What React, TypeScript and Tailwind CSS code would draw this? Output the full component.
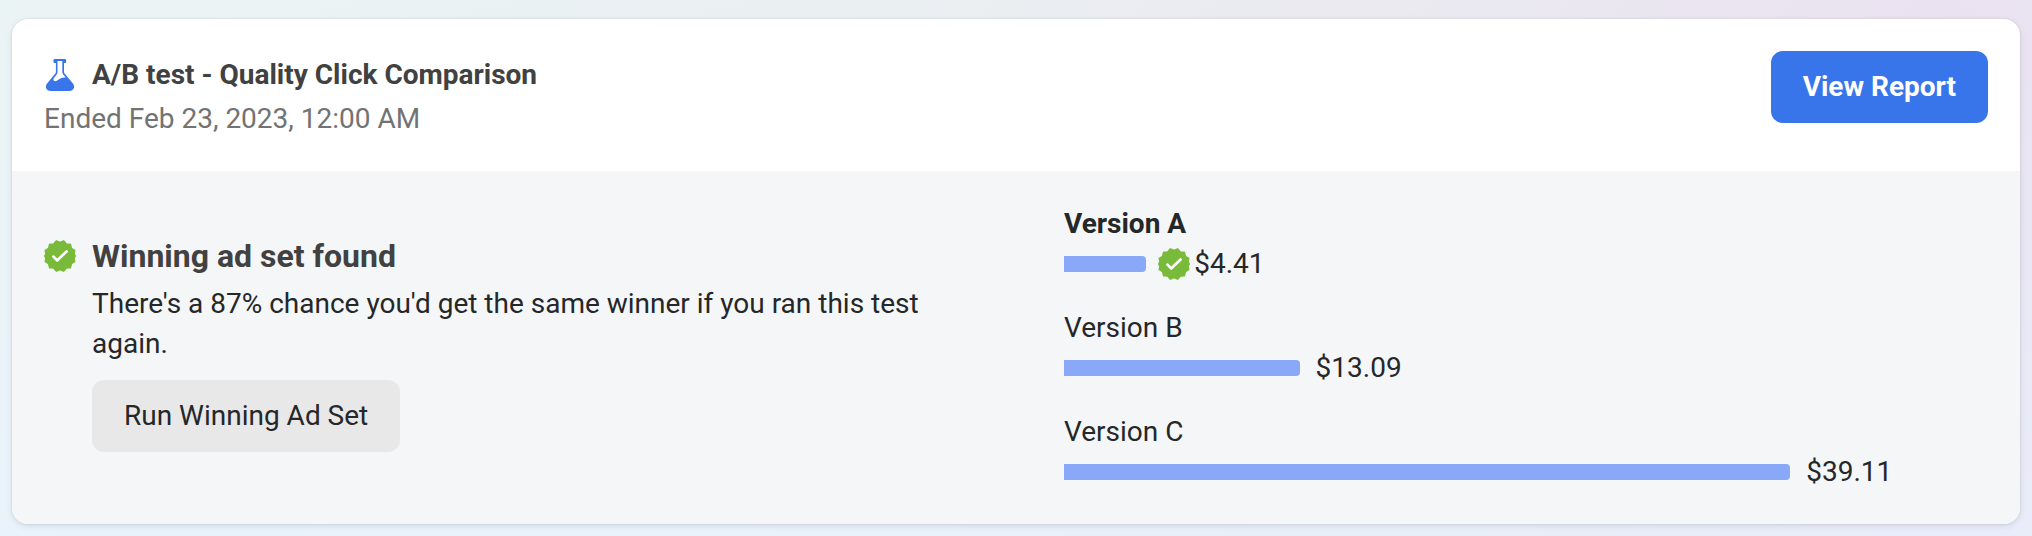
import { useId } from "react";

const results = [
  { name: "Version A", cost: "$4.41", share: 8.9, winner: true },
  { name: "Version B", cost: "$13.09", share: 25.5, winner: false },
  { name: "Version C", cost: "$39.11", share: 78.6, winner: false },
];

function FlaskIcon() {
  return (
    <svg viewBox="0 0 32 32" className="size-8 shrink-0" aria-hidden="true">
      <path
        fillRule="evenodd"
        fill="#3875ea"
        d="M10.9 0h9.800c.9 0 1.500.7 1.500 1.600v.8c0 .9-.6 1.600-1.500 1.600H20v8.700c0 .8.3 1.500.8 2.100l8.300 9.900c2.400 3.100.4 7.300-3.600 7.300H6.500c-4 0-6-4.200-3.600-7.300l8.200-9.900c.5-.6.8-1.300.8-2.100V4h-1C10 4 9.400 3.300 9.400 2.400v-.8C9.400.7 10 0 10.900 0ZM13.500 2v11.100c0 .9-.3 1.800-.9 2.500L9.800 19.200c-.6.8-.6 1.900.2 2.500.8.7 2 .5 3.200-.2 2.300-1.400 4.400-3.200 8.600-2.900l-2.600-3.100c-.6-.7-.9-1.500-.9-2.400V2Z"
      />
    </svg>
  );
}

function WinnerBadge() {
  return (
    <svg viewBox="0 0 32 32" className="size-8 shrink-0" aria-hidden="true">
      <path
        fill="#7aba3a"
        stroke="#7aba3a"
        strokeWidth="1.6"
        strokeLinejoin="round"
        d="M12.300.9 16 2.500 19.700.9 22.300 4 26.300 4.300 27.300 8.300 30.700 10.500 30 13.500 31.200 16 30 18.500 30.700 21.500 27.300 23.700 26.300 27.700 22.300 28 19.700 31.100 16 29.500 12.300 31.100 9.700 28 5.700 27.700 4.700 23.700 1.300 21.500 2 18.500.8 16 2 13.500 1.300 10.500 4.700 8.300 5.700 4.300 9.700 4Z"
      />
      <path
        d="m9.500 16.600 3.600 3.800 9.500-9"
        fill="none"
        stroke="#fff"
        strokeWidth="2.700"
        strokeLinecap="round"
        strokeLinejoin="round"
      />
    </svg>
  );
}

export default function App() {
  const headingId = useId();
  return (
    <main className="min-h-screen bg-[linear-gradient(to_bottom,rgba(232,242,255,0)_0%,rgba(232,242,255,0.6)_100%),linear-gradient(to_right,#ebf4f5_0%,#eaeff2_45%,#eae8f0_75%,#eae2f0_95%,#eae3f1_100%)] px-3 pt-[19px] pb-3 font-[Roboto,sans-serif] text-[28px] leading-10 text-[#252728]">
      <article
        aria-labelledby={headingId}
        className="overflow-hidden rounded-2xl bg-white shadow-[0_0_2px_rgba(0,0,0,0.12),0_2px_6px_rgba(0,0,0,0.1)]"
      >
        <header className="flex items-start justify-between gap-8 p-8">
          <div className="flex flex-col gap-1 pt-1">
            <div className="flex items-center gap-4">
              <FlaskIcon />
              <h2 id={headingId} className="font-bold text-[#414141]">
                A/B test - Quality Click Comparison
              </h2>
            </div>
            <p className="text-[#737373]">Ended Feb 23, 2023, 12:00 AM</p>
          </div>
          <button
            type="button"
            className="shrink-0 rounded-xl bg-[#3875ea] px-8 py-4 font-bold text-white"
          >
            View Report
          </button>
        </header>
        <div className="grid grid-cols-2 gap-24 bg-[#f4f6f8] px-8 pt-[33px] pb-8">
          <section className="flex items-start gap-4 pt-8">
            <div className="flex h-10 items-center">
              <WinnerBadge />
            </div>
            <div className="flex flex-col items-start">
              <h3 className="mb-2 text-[32px] font-bold text-[#414141]">Winning ad set found</h3>
              <p className="mb-4">
                There's a 87% chance you'd get the same winner if you ran this test again.
              </p>
              <button type="button" className="rounded-xl bg-[#e8e8e8] px-8 py-4">
                Run Winning Ad Set
              </button>
            </div>
          </section>
          <ul className="flex flex-col gap-6">
            {results.map((r) => (
              <li key={r.name}>
                <div className={r.winner ? "font-bold" : ""}>{r.name}</div>
                <div className="flex items-center">
                  <div
                    className="h-4 rounded-r bg-[#89a8f8]"
                    style={{ width: `${r.share}%` }}
                  />
                  {r.winner ? (
                    <div className="ml-3 flex items-center gap-1">
                      <WinnerBadge />
                      <span>{r.cost}</span>
                    </div>
                  ) : (
                    <span className="ml-4">{r.cost}</span>
                  )}
                </div>
              </li>
            ))}
          </ul>
        </div>
      </article>
    </main>
  );
}
